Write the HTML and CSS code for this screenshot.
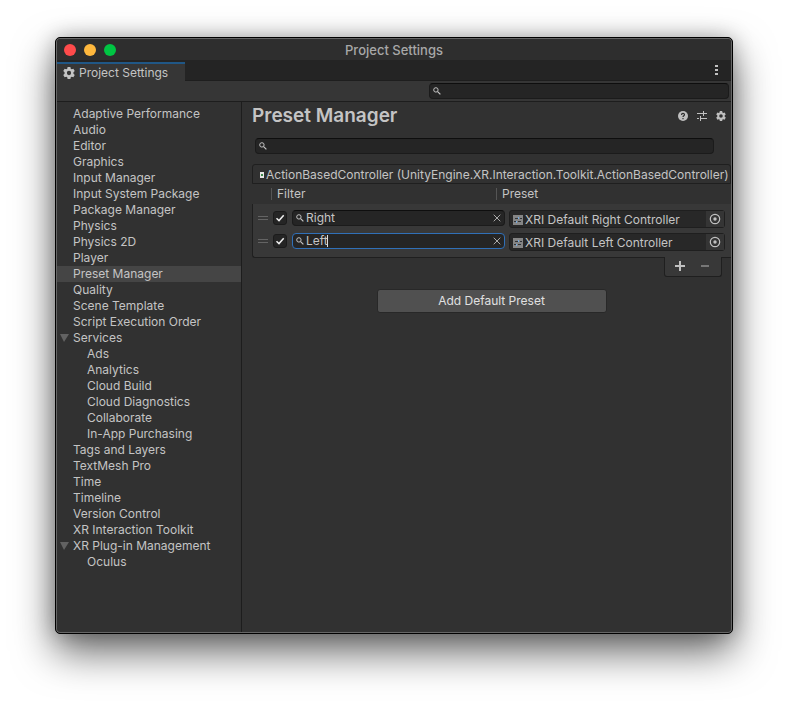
FILE: index.html
```html
<!DOCTYPE html>
<html lang="en">
<head>
<meta charset="utf-8">
<title>Project Settings</title>
<link rel="stylesheet" href="styles.css">
</head>
<body>
<svg class="defs" width="0" height="0" aria-hidden="true">
  <symbol id="gear" viewBox="0 0 24 24"><path fill-rule="evenodd" d="M9.2 0h5.600l.7 3.400 1.900 1.100 3.300-1.200 2.800 4.900-2.600 2.200v3.200l2.600 2.200-2.800 4.900-3.300-1.200-1.900 1.100-.7 3.400H9.200l-.7-3.400-1.900-1.100-3.300 1.200-2.800-4.900 2.600-2.200v-3.200L.5 8.200l2.800-4.900 3.300 1.200 1.900-1.100zM12 7.700a4.300 4.300 0 1 0 0 8.600 4.300 4.300 0 0 0 0-8.600z"/></symbol>
  <symbol id="lens" viewBox="0 0 8 8"><circle cx="2.9" cy="2.9" r="2.2" fill="none" stroke="currentColor"/><path d="M4.6 4.6l2.8 2.8" stroke="currentColor" stroke-width="1.2"/></symbol>
  <symbol id="cross" viewBox="0 0 8 8"><path d="M.7.7l6.6 6.6M7.3.7L.7 7.3" stroke="currentColor" stroke-width="1"/></symbol>
  <symbol id="preset" viewBox="0 0 10 10"><path fill="#858585" d="M0 0h10v10H0z"/><path stroke="#303338" d="M2 3.500h3M7 3.500h2M1 6.500h2M5 6.500h3"/><path fill="#74a9df" d="M5 2h1v2H5zM3 6h1v2H3z"/></symbol>
  <symbol id="target" viewBox="0 0 12 12"><circle cx="6" cy="6" r="4.700" fill="none" stroke="currentColor" stroke-width="1.200"/><circle cx="6" cy="6" r="1.700"/></symbol>
</svg>
<div class="window">
  <header class="titlebar">
    <div class="lights"><button class="light close" aria-label="Close"></button><button class="light minimize" aria-label="Minimize"></button><button class="light zoom" aria-label="Zoom"></button></div>
    <h1>Project Settings</h1>
  </header>
  <div class="tabs">
    <button class="tab"><svg width="12" height="12"><use href="#gear"/></svg>Project Settings</button>
    <button class="icon-button more" aria-label="More"><svg width="3" height="10" viewBox="0 0 3 10"><path d="M0 0h3v2H0zM0 4h3v2H0zM0 8h3v2H0z"/></svg></button>
  </div>
  <div class="toolbar">
    <label class="search"><svg width="8" height="8"><use href="#lens"/></svg><input type="search" aria-label="Search settings"></label>
  </div>
  <div class="content">
    <nav class="sidebar" aria-label="Settings">
      <a href="#">Adaptive Performance</a>
      <a href="#">Audio</a>
      <a href="#">Editor</a>
      <a href="#">Graphics</a>
      <a href="#">Input Manager</a>
      <a href="#">Input System Package</a>
      <a href="#">Package Manager</a>
      <a href="#">Physics</a>
      <a href="#">Physics 2D</a>
      <a href="#">Player</a>
      <a href="#" class="selected">Preset Manager</a>
      <a href="#">Quality</a>
      <a href="#">Scene Template</a>
      <a href="#">Script Execution Order</a>
      <a href="#" class="group">Services</a>
      <a href="#" class="child">Ads</a>
      <a href="#" class="child">Analytics</a>
      <a href="#" class="child">Cloud Build</a>
      <a href="#" class="child">Cloud Diagnostics</a>
      <a href="#" class="child">Collaborate</a>
      <a href="#" class="child">In-App Purchasing</a>
      <a href="#">Tags and Layers</a>
      <a href="#">TextMesh Pro</a>
      <a href="#">Time</a>
      <a href="#">Timeline</a>
      <a href="#">Version Control</a>
      <a href="#">XR Interaction Toolkit</a>
      <a href="#" class="group">XR Plug-in Management</a>
      <a href="#" class="child">Oculus</a>
    </nav>
    <main class="main">
      <div class="heading">
        <h2>Preset Manager</h2>
        <div class="actions">
          <button class="icon-button" aria-label="Help"><svg width="10" height="10" viewBox="0 0 10 10"><circle cx="5" cy="5" r="5"/><path d="M3.500 3.900c0-2 3-2 3-.2C6.500 4.800 5 4.700 5 6M5 7v1.200" fill="none" stroke="#303030" stroke-width="1.200"/></svg></button>
          <button class="icon-button" aria-label="Presets"><svg width="10" height="10" viewBox="0 0 10 10"><path d="M0 2h6v1H0zM7 2h3v1H7zM6 0h1v5H6zM0 7h2v1H0zM4 7h6v1H4zM3 5h1v5H3z"/></svg></button>
          <button class="icon-button" aria-label="Settings"><svg width="10" height="10"><use href="#gear"/></svg></button>
        </div>
      </div>
      <label class="search"><svg width="8" height="8"><use href="#lens"/></svg><input type="search" aria-label="Search presets"></label>
      <section class="presets">
        <h3><svg width="4" height="6" viewBox="0 0 4 6"><path fill="#e6e6e6" d="M0 0h4v6H0z"/><path fill="#3c8a4b" d="M1 2h2v2H1z"/></svg>ActionBasedController (UnityEngine.XR.Interaction.Toolkit.ActionBasedController)</h3>
        <div class="columns"><span>Filter</span><span>Preset</span></div>
        <div class="rows">
          <div class="row">
            <span class="grip"></span>
            <input type="checkbox" aria-label="Enable right preset" checked>
            <label class="search filter"><svg width="8" height="8"><use href="#lens"/></svg><input type="text" aria-label="Right filter" value="Right"><button class="icon-button clear" aria-label="Clear filter"><svg width="8" height="8"><use href="#cross"/></svg></button></label>
            <div class="object"><svg width="10" height="10"><use href="#preset"/></svg><span>XRI Default Right Controller</span><button class="icon-button pick" aria-label="Select preset"><svg width="12" height="12"><use href="#target"/></svg></button></div>
          </div>
          <div class="row">
            <span class="grip"></span>
            <input type="checkbox" aria-label="Enable left preset" checked>
            <label class="search filter active"><svg width="8" height="8"><use href="#lens"/></svg><input type="text" aria-label="Left filter" value="Left"><i class="caret"></i><button class="icon-button clear" aria-label="Clear filter"><svg width="8" height="8"><use href="#cross"/></svg></button></label>
            <div class="object"><svg width="10" height="10"><use href="#preset"/></svg><span>XRI Default Left Controller</span><button class="icon-button pick" aria-label="Select preset"><svg width="12" height="12"><use href="#target"/></svg></button></div>
          </div>
        </div>
        <div class="footer">
          <button class="icon-button" aria-label="Add"><svg width="10" height="10" viewBox="0 0 10 10"><path d="M4 0h2v4h4v2H6v4H4V6H0V4h4z"/></svg></button>
          <button class="icon-button" aria-label="Remove" disabled><svg width="8" height="10" viewBox="0 0 8 10"><path d="M0 4h8v2H0z"/></svg></button>
        </div>
      </section>
      <button class="add">Add Default Preset</button>
    </main>
  </div>
</div>
</body>
</html>
```
FILE: styles.css
```css
* { box-sizing: border-box; }

body {
  margin: 0;
  padding: 37px 55px 73px;
  min-height: 100vh;
  display: flex;
  background: #fff;
  color: #c4c4c4;
  font: 12px/16px Inter, "Liberation Sans", sans-serif;
}

button, input { font: inherit; color: inherit; margin: 0; padding: 0; border: 0; background: none; }
input { outline: 0; }
h1, h2, h3 { margin: 0; }
svg { display: block; flex: none; fill: currentColor; }
.defs { position: absolute; }

.window {
  flex: 1;
  min-width: 0;
  display: flex;
  flex-direction: column;
  overflow: hidden;
  border: 1px solid #000;
  border-radius: 5px;
  padding: 1px;
  background: #313131;
  box-shadow: inset 0 0 0 1px #666, 0 18px 40px rgba(0, 0, 0, .6), 0 0 20px rgba(0, 0, 0, .25);
}

.titlebar {
  display: grid;
  grid-template-columns: 1fr auto 1fr;
  align-items: center;
  height: 21px;
  background: #2e2e2e;
  border-radius: 4px 4px 0 0;
}
.titlebar h1 { font-size: 13px; font-weight: 500; color: #a8a8a8; }
.lights { display: flex; gap: 8px; padding-left: 7px; }
.light { width: 12px; height: 12px; border-radius: 50%; }
.close { background: #ff4b4b; }
.minimize { background: #ffb83d; }
.zoom { background: #00c543; }

.tabs {
  display: flex;
  justify-content: space-between;
  height: 21px;
  padding-top: 2px;
  background: #242424;
  box-shadow: inset 0 -1px #1e1e1e;
}
.tab {
  display: flex;
  align-items: center;
  gap: 4px;
  width: 128px;
  padding-left: 6px;
  border-top: 2px solid #205786;
  background: #363636;
}
.icon-button { display: flex; align-items: center; justify-content: center; color: #c0c0c0; }
.more { width: 30px; height: 16px; }

.toolbar {
  display: flex;
  justify-content: flex-end;
  padding: 2px 2px 2px 0;
  background: #363636;
  border-bottom: 1px solid #1d1d1d;
}
.toolbar .search { width: 300px; }

.search {
  display: flex;
  align-items: center;
  gap: 2px;
  height: 16px;
  padding: 0 3px;
  border: 1px solid #1b1b1b;
  border-top-color: #0e0e0e;
  border-radius: 4px;
  background: #252525;
}
.search input { flex: 1; min-width: 0; height: 14px; }

.content { flex: 1; display: flex; min-height: 0; }
.sidebar {
  flex: none;
  width: 185px;
  padding-top: 4px;
  border-right: 1px solid #1d1d1d;
}
.sidebar a { display: flex; align-items: center; padding-left: 16px; color: inherit; text-decoration: none; }
.sidebar .selected { background: #454545; }
.sidebar .child { padding-left: 30px; }
.sidebar .group { padding-left: 3px; gap: 4px; }
.group::before {
  content: "";
  border: solid transparent;
  border-width: 8px 5px 0 4px;
  border-top-color: #626262;
}

.main { flex: 1; min-width: 0; padding-left: 10px; }
.heading { display: flex; align-items: center; justify-content: space-between; height: 28px; padding-right: 5px; }
.heading h2 { font-size: 19px; font-weight: 600; line-height: 24px; }
.actions { display: flex; gap: 9px; }
.main > .search { margin: 8px 17px 10px 3px; }

.presets h3 {
  display: flex;
  align-items: center;
  gap: 2px;
  height: 20px;
  padding: 2px 0 0 7px;
  border: 1px solid #1f1f1f;
  border-radius: 3px 3px 0 0;
  font-size: 12px;
  font-weight: 400;
  white-space: nowrap;
}
.columns {
  display: grid;
  grid-template-columns: 225px 1fr;
  align-items: center;
  height: 20px;
  padding-left: 19px;
}
.columns span { height: 12px; padding-left: 5px; line-height: 12px; border-left: 1px solid #555; }
.rows {
  display: grid;
  gap: 5px;
  padding: 6px 6px 6px 5px;
  border: solid #1f1f1f;
  border-width: 0 0 1px 1px;
  border-radius: 0 0 0 3px;
  background: #383838;
}
.row { display: grid; grid-template-columns: 10px 14px 213px 1fr; column-gap: 5px; align-items: start; height: 18px; }
.grip { height: 4px; margin-top: 6px; border: solid #646464; border-width: 1px 0; }
.row input[type="checkbox"] {
  appearance: none;
  width: 14px;
  height: 14px;
  margin-top: 1px;
  border: 1px solid #1b1b1b;
  border-radius: 3px;
  background: #252525 url("data:image/svg+xml,%3Csvg xmlns='http://www.w3.org/2000/svg' viewBox='0 0 12 12'%3E%3Cpath d='M2.500 6.300l2.500 2.300 4.700-5.300' fill='none' stroke='%23eee' stroke-width='1.500'/%3E%3C/svg%3E");
}
.filter input { flex: none; field-sizing: content; max-width: 180px; }
.filter .clear { margin-left: auto; padding: 3px 0; color: #aaa; }
.filter.active { border-color: #3070b8; }
.filter.active input { margin-right: -3px; }
.caret { width: 1px; height: 12px; background: #ddd; }
.object {
  display: flex;
  align-items: center;
  gap: 2px;
  height: 18px;
  margin-left: -1px;
  padding: 1px 0 0 3px;
  border: 1px solid #1f1f1f;
  border-radius: 3px;
  background: #282828;
}
.pick { align-self: stretch; width: 18px; margin: -1px 0 0 auto; background: #353535; }
.footer {
  display: flex;
  justify-content: space-between;
  width: 58px;
  height: 20px;
  margin: -1px 9px 0 auto;
  padding: 0 12px 1px 10px;
  border: solid #1f1f1f;
  border-width: 0 1px 1px;
  border-radius: 0 0 3px 3px;
  background: #383838;
}
.footer button:disabled { color: #777; }
.add {
  display: block;
  width: 230px;
  height: 24px;
  margin: 12px auto 0;
  border: 1px solid #282828;
  border-radius: 3px;
  background: #505050;
  color: #e0e0e0;
}
```
